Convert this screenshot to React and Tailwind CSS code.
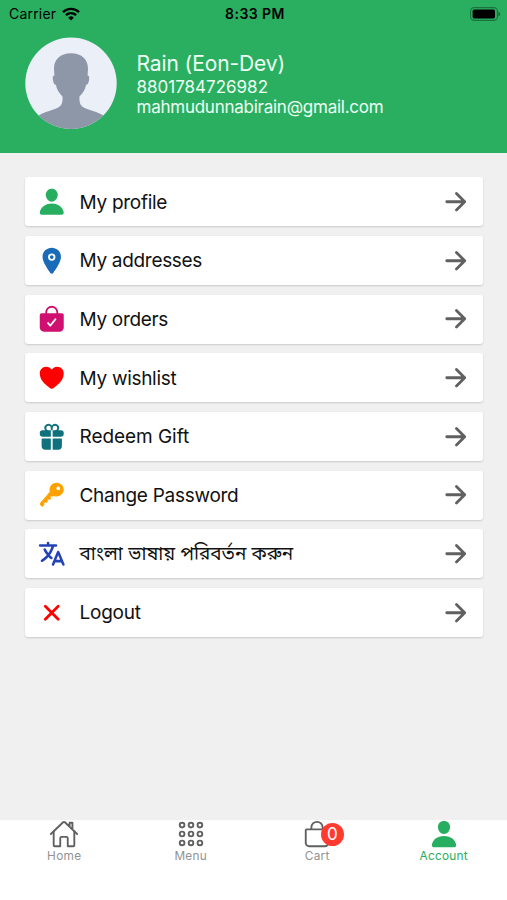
import {
  IoPerson, IoLocation, IoBagCheck, IoHeart, IoGift, IoKey, IoLanguage,
  IoClose, IoArrowForward, IoHomeOutline, IoAppsOutline, IoBagOutline,
} from 'react-icons/io5';

const rows = [
  { label: 'My profile', Icon: IoPerson, color: 'text-[#27ae60]', track: 'tracking-[-0.28px]' },
  { label: 'My addresses', Icon: IoLocation, color: 'text-[#1a6cb8]', track: 'tracking-[-0.31px]' },
  { label: 'My orders', Icon: IoBagCheck, color: 'text-[#d01070]', track: 'tracking-[-0.32px]' },
  { label: 'My wishlist', Icon: IoHeart, color: 'text-[#ff0000]', track: 'tracking-[-0.3px]' },
  { label: 'Redeem Gift', Icon: IoGift, color: 'text-[#0f717b]', track: 'tracking-[-0.05px]' },
  { label: 'Change Password', Icon: IoKey, color: 'text-[#ffa100]', track: 'tracking-[-0.27px]' },
  { label: 'বাংলা ভাষায় পরিবর্তন করুন', Icon: IoLanguage, color: 'text-[#2343b5]', track: 'text-[18.9px]' },
  { label: 'Logout', Icon: IoClose, color: 'text-[#ff0000]', track: 'tracking-[-0.25px]' },
];

function StatusBar() {
  return (
    <div className="flex h-[28px] items-center justify-between pl-[9px] pr-[9px] text-black">
      <div className="flex w-[90px] items-center gap-[6px]">
        <span className="text-[14px] leading-none tracking-[0.2px]">Carrier</span>
        <svg width="18" height="14" viewBox="0 0 18 14" fill="none" stroke="currentColor" strokeWidth="2.4">
          <path d="M1 5.2a11.4 11.4 0 0 1 16 0" />
          <path d="M3.9 8.2a7.3 7.3 0 0 1 10.2 0" />
          <path d="M9 13.5 6.2 10.7a4 4 0 0 1 5.6 0Z" fill="currentColor" stroke="none" />
        </svg>
      </div>
      <span className="text-[14px] font-semibold leading-none tracking-[0.45px]">8:33 PM</span>
      <div className="-mr-[3px] flex w-[90px] justify-end">
        <svg width="31" height="14" viewBox="0 0 31 14">
          <rect x="0.6" y="0.6" width="26.8" height="12.8" rx="3.6" fill="none" stroke="#000" strokeOpacity=".35" strokeWidth="1.1" />
          <rect x="2.6" y="2.6" width="22.4" height="8.8" rx="1.6" />
          <path d="M28.4 4.7c2.4.9 2.4 3.7 0 4.6Z" fillOpacity=".4" />
        </svg>
      </div>
    </div>
  );
}

function Avatar() {
  return (
    <svg width="92" height="92" viewBox="0 0 92 92" className="shrink-0">
      <clipPath id="disc"><circle cx="46" cy="46.3" r="45.7" /></clipPath>
      <g clipPath="url(#disc)">
        <rect width="92" height="92" fill="#ebeff8" />
        <path fill="#8e97a8" d="M46 16.3c-11 0-17.3 6.6-17 15.8l.4 6.4c-1.7 0-1.9 2-1.4 4.8.5 2.7 1.3 4.7 2.9 4.5.8 4.4 3 8.2 6.6 11.8.5 7.6-1.5 10.2-7 12.2C24 74.2 17.5 75.6 12 79.5V92h68V79.5c-5.5-3.9-12-5.3-18.5-7.7-5.5-2-7.5-4.6-7-12.2 3.6-3.6 5.800-7.400 6.600-11.800 1.600.2 2.400-1.800 2.900-4.500.5-2.800.3-4.800-1.400-4.800l.4-6.400C63.300 22.900 57 16.300 46 16.300Z" />
      </g>
    </svg>
  );
}

function Tab({ label, children, className = '' }) {
  return (
    <div className={`flex flex-1 flex-col items-center ${className}`}>
      <div className="relative -mt-px h-[30px]">{children}</div>
      <span className="text-[11.8px] leading-[14px] tracking-[0.3px]">{label}</span>
    </div>
  );
}

export default function App() {
  return (
    <div className="flex h-[900px] w-[507px] flex-col overflow-hidden bg-[#f0f0f0] font-['Inter','Noto_Sans_Bengali','Noto_Sans',sans-serif]">
      <header className="h-[153px] shrink-0 bg-[#2aaf61]">
        <StatusBar />
        <div className="flex gap-[19.5px] pl-[25px] pt-[9px]">
          <Avatar />
          <div className="pt-[14px] text-[#effff4]">
            <div className="text-[21px] leading-[26px] tracking-[-0.1px]">Rain (Eon-Dev)</div>
            <div className="text-[17px] leading-[20px]">8801784726982</div>
            <div className="text-[17px] leading-[21px] tracking-[-0.25px]">mahmudunnabirain@gmail.com</div>
          </div>
        </div>
      </header>
      <main className="flex min-h-0 flex-1 flex-col gap-[9.65px] px-[25px] pt-[24.4px]">
        {rows.map(({ label, Icon, color, track }) => (
          <div key={label} className="flex h-[49px] w-[458px] shrink-0 items-center rounded-[3px] bg-white pl-[12px] pr-[12.5px] shadow-[0_1px_2px_rgba(0,0,0,0.16)]">
            <Icon className={`size-[29.5px] shrink-0 ${color}`} />
            <div className="ml-[13px] flex-1 whitespace-nowrap pt-[1.4px] text-[19px] leading-[26px] text-[#111]">
              <span className={track}>{label}</span>
            </div>
            <IoArrowForward className="size-[29.5px] shrink-0 text-[#606060]" />
          </div>
        ))}
      </main>
      <nav className="flex h-[80px] shrink-0 bg-white pl-px text-[#929292]">
        <Tab label="Home"><IoHomeOutline className="size-[30px] text-[#606060]" /></Tab>
        <Tab label="Menu"><IoAppsOutline className="size-[30px] text-[#606060]" /></Tab>
        <Tab label="Cart">
          <IoBagOutline className="size-[30px] text-[#606060]" />
          <span className="absolute left-[18.500px] top-[4px] flex size-[23px] items-center justify-center rounded-full bg-[#ff3b30] text-[17px] leading-none text-white">0</span>
        </Tab>
        <Tab label="Account" className="text-[#27ae60]"><IoPerson className="size-[30px]" /></Tab>
      </nav>
    </div>
  );
}
